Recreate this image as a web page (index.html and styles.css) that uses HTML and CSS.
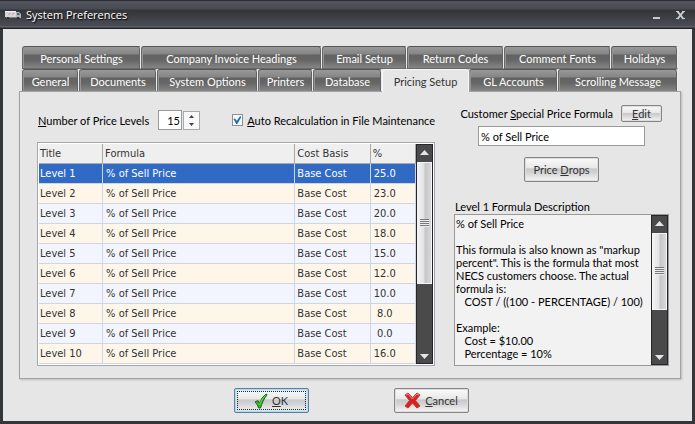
FILE: index.html
```html
<!DOCTYPE html>
<html lang="en">
<head>
<meta charset="utf-8">
<title>System Preferences</title>
<link rel="stylesheet" href="styles.css">
</head>
<body>
<div class="window">
  <header class="titlebar">
    <svg class="truck" width="17" height="10" viewBox="0 0 17 10" aria-hidden="true">
      <rect x="0" y="1" width="11" height="6" fill="#d4d6da"/>
      <rect x="0" y="1" width="11" height="1" fill="#f1f1f3"/>
      <path d="M11 2h3l2 2v4h-5z" fill="#aeb4bc"/>
      <path d="M12 3h2l1 2h-3z" fill="#59636f"/>
      <path d="M3.500 5l2-2M7 5l2-2" stroke="#e08a8c" stroke-width="1"/>
      <rect x="1" y="7" width="14" height="1" fill="#7b8088"/>
      <circle cx="3" cy="8" r="1" fill="#202226"/><circle cx="13" cy="8" r="1" fill="#202226"/>
    </svg>
    <h1>System Preferences</h1>
    <button class="caption" aria-label="Minimize"><svg width="9" height="9" viewBox="0 0 9 9"><path d="M1 6h7v2H1z" fill="#c3ccd5"/></svg></button>
    <button class="caption" aria-label="Close"><svg width="9" height="9" viewBox="0 0 9 9"><path d="M1.500 .5l6 7.500M7.500 .5l-6 7.500" stroke="#c3ccd5" stroke-width="2"/><path d="M0 0h3v1H0zM6 0h3v1H6zM0 7h3v1H0zM6 7h3v1H6z" fill="#c3ccd5"/></svg></button>
  </header>

  <main class="client">
    <nav class="tabs">
      <div class="tab-row row-back">
        <button class="tab">Personal Settings</button>
        <button class="tab">Company Invoice Headings</button>
        <button class="tab">Email Setup</button>
        <button class="tab">Return Codes</button>
        <button class="tab">Comment Fonts</button>
        <button class="tab">Holidays</button>
      </div>
      <div class="tab-row row-front">
        <button class="tab">General</button>
        <button class="tab">Documents</button>
        <button class="tab">System Options</button>
        <button class="tab">Printers</button>
        <button class="tab">Database</button>
        <button class="tab active">Pricing Setup</button>
        <button class="tab">GL Accounts</button>
        <button class="tab">Scrolling Message</button>
      </div>
    </nav>

    <section class="panel">
      <div class="levels">
        <div class="options">
          <label for="count"><u>N</u>umber of Price Levels</label>
          <input class="field count" id="count" type="text" value="15">
          <button class="spinner" aria-label="Change number of levels">
            <svg width="5" height="13" viewBox="0 0 5 13"><path d="M2.500 1L5 4H0zM0 9h5L2.500 12z" fill="#444"/></svg>
          </button>
          <input class="check" id="auto" type="checkbox" checked>
          <label for="auto"><u>A</u>uto Recalculation in File Maintenance</label>
        </div>
        <div class="grid-box">
          <table>
            <colgroup><col class="c-title"><col class="c-formula"><col class="c-basis"><col class="c-pct"></colgroup>
            <thead><tr><th>Title</th><th>Formula</th><th>Cost Basis</th><th>%</th></tr></thead>
            <tbody>
              <tr class="selected"><td>Level 1</td><td>% of Sell Price</td><td>Base Cost</td><td>25.0</td></tr>
              <tr><td>Level 2</td><td>% of Sell Price</td><td>Base Cost</td><td>23.0</td></tr>
              <tr><td>Level 3</td><td>% of Sell Price</td><td>Base Cost</td><td>20.0</td></tr>
              <tr><td>Level 4</td><td>% of Sell Price</td><td>Base Cost</td><td>18.0</td></tr>
              <tr><td>Level 5</td><td>% of Sell Price</td><td>Base Cost</td><td>15.0</td></tr>
              <tr><td>Level 6</td><td>% of Sell Price</td><td>Base Cost</td><td>12.0</td></tr>
              <tr><td>Level 7</td><td>% of Sell Price</td><td>Base Cost</td><td>10.0</td></tr>
              <tr><td>Level 8</td><td>% of Sell Price</td><td>Base Cost</td><td>&nbsp;8.0</td></tr>
              <tr><td>Level 9</td><td>% of Sell Price</td><td>Base Cost</td><td>&nbsp;0.0</td></tr>
              <tr><td>Level 10</td><td>% of Sell Price</td><td>Base Cost</td><td>16.0</td></tr>
            </tbody>
          </table>
          <div class="scroll scroll-grid">
            <svg class="arrow" viewBox="0 0 9 5"><path d="M4.500 0L9 5H0z"/></svg>
            <div class="thumb"><i class="grip"></i></div>
            <svg class="arrow" viewBox="0 0 9 5"><path d="M0 0h9L4.500 5z"/></svg>
          </div>
        </div>
      </div>

      <div class="formula">
        <div class="special">
          <label for="special">Customer <u>S</u>pecial Price Formula</label>
          <button class="btn edit"><span><u>E</u>dit</span></button>
        </div>
        <input class="field special-field" id="special" type="text" value="% of Sell Price">
        <button class="btn drops"><span>Price <u>D</u>rops</span></button>
        <label class="desc-label" for="desc">Level 1 Formula Description</label>
        <div class="desc-box">
          <textarea id="desc" readonly>% of Sell Price

This formula is also known as "markup
percent". This is the formula that most
NECS customers choose. The actual
formula is:
   COST / ((100 - PERCENTAGE) / 100)

Example:
   Cost = $10.00
   Percentage = 10%</textarea>
          <div class="scroll scroll-desc">
            <svg class="arrow" viewBox="0 0 9 5"><path d="M4.500 0L9 5H0z"/></svg>
            <div class="thumb"><i class="grip"></i></div>
            <svg class="arrow" viewBox="0 0 9 5"><path d="M0 0h9L4.500 5z"/></svg>
          </div>
        </div>
      </div>
    </section>

    <footer class="actions">
      <button class="btn ok">
        <svg width="14" height="16" viewBox="0 0 14 16" aria-hidden="true"><path d="M1 9l3-1.500 1.500 3C7 6 9 3 12.500 1L13 2C10 5.500 8 10 6.500 15H4.500C4 12.500 2.500 10.500 1 9z" fill="#3cb52c" stroke="#14690f" stroke-width="1"/><path d="M5.500 12C7 8 9 4.500 11.500 2.500" stroke="#6fd655" fill="none"/></svg>
        <span><u>O</u>K</span>
      </button>
      <button class="btn cancel">
        <svg width="17" height="17" viewBox="0 0 17 17" aria-hidden="true"><path d="M1 3l3-2 4.500 4.500L13 1l3 2-4.500 5.500L16 14l-3 2-4.500-5L4 16l-3-2 4.500-5.500z" fill="#d8201f" stroke="#c23a3a" stroke-width="1" stroke-linejoin="round"/><path d="M2 3l2-1 4.500 5L13 2l2 1" fill="none" stroke="#f08a86"/></svg>
        <span><u>C</u>ancel</span>
      </button>
    </footer>
  </main>
</div>
</body>
</html>
```
FILE: styles.css
```css
* { box-sizing: border-box; }

body {
  margin: 0;
  font-family: Lato, "Liberation Sans", sans-serif;
  font-size: 11px;
  line-height: 13px;
  color: #000;
}

button, input, textarea {
  font: inherit;
  color: inherit;
  margin: 0;
  padding: 0;
  border-radius: 0;
}

.window {
  min-height: 100vh;
  display: flex;
  flex-direction: column;
  padding: 0 3px 3px;
  background: #34373a;
  border-top: 1px solid #2c2d32;
}

.titlebar {
  height: 28px;
  display: flex;
  align-items: center;
  margin: 0 -3px;
  padding: 0 10px 0 5px;
  background: linear-gradient(#52545e 0, #484a54 8px, #343538 9px, #3d3e43 16px, #4b4d57 25px, #6a6c75 26px, #22232b 27px);
}

.titlebar h1 {
  flex: 1;
  margin: 0 0 0 4px;
  font-family: "Open Sans", sans-serif;
  font-size: 11px;
  font-weight: 400;
  line-height: 16px;
  color: #fff;
  text-shadow: 1px 1px 1px #000;
}

.caption {
  display: flex;
  margin-left: 15px;
  border: 0;
  background: none;
}

.client {
  flex: 1;
  display: flex;
  flex-direction: column;
  padding: 17px 11px 8px 16px;
  background: #e6e6e6;
}

.tab-row { display: grid; height: 23px; margin: 0 3px; }
.row-back { grid-template-columns: 119fr 181fr 85fr 97fr 107fr 67fr; }
.row-front { height: 22px; grid-template-columns: 57fr 78fr 101fr 55fr 69fr 87fr 89fr 120fr; }

.tab {
  min-width: 0;
  padding-top: 2px;
  border: 1px solid #686868;
  border-top: 1px solid #555;
  border-right: 1px solid #eee;
  border-radius: 3px 3px 0 0;
  background: linear-gradient(#999 0, #858585 7px, #626262 8px, #666 13px, #888 22px);
  box-shadow: inset -1px 0 #626262, inset 1px 0 #959595;
  color: #fff;
  white-space: nowrap;
}

.tab.active {
  position: relative;
  height: 23px;
  padding-top: 0;
  border: 1px solid #f6f6f6;
  border-bottom: 0;
  background: #e6e6e6;
  box-shadow: 1px 0 #999;
  color: #333;
}

.panel {
  flex: 1;
  display: grid;
  grid-template-columns: minmax(0, 398fr) minmax(0, 215fr);
  column-gap: 19px;
  padding: 13px 11px 12px 17px;
  border: 1px solid #a2a2a2;
  box-shadow: 1px 1px 2px #bbb;
}

.levels, .formula { display: flex; flex-direction: column; }
.levels { padding-top: 5px; }

.options { display: flex; align-items: center; height: 20px; margin-bottom: 12px; padding-left: 1px; white-space: nowrap; }
.options label:first-child { flex: 0 0 112px; }
.field { height: 20px; padding: 0 2px; border: 1px solid #999; background: #fff; }
.count { width: 24px; margin-left: 8px; padding-right: 1px; text-align: right; }

.spinner {
  display: flex;
  align-items: center;
  justify-content: center;
  width: 17px;
  height: 19px;
  margin-left: 1px;
  border: 1px solid #aaa;
  background: #f8f8f8;
}

.check {
  appearance: none;
  width: 12px;
  height: 12px;
  margin: 0 4px 0 32px;
  border: 1px solid #8c8f94;
  background: #f7f9fb;
  display: grid;
  place-items: center;
}

.check:checked::before {
  content: "";
  width: 8px;
  height: 8px;
  background: #2470b8;
  clip-path: polygon(0 38%, 20% 30%, 42% 60%, 85% 0, 100% 12%, 48% 100%, 34% 100%);
}

.grid-box { flex: 1; display: flex; padding: 1px; border: 1px solid #a3a7ae; background: #fff; }

table {
  flex: 1;
  height: 220px;
  table-layout: fixed;
  border-spacing: 0;
  font-family: "DejaVu Sans Condensed", "DejaVu Sans", sans-serif;
  color: #333;
}

.c-title { width: 17%; }
.c-formula { width: 51%; }
.c-basis { width: 20%; }
.c-pct { width: 12%; }

th, td {
  height: 20px;
  padding: 0 1px;
  border: solid #ced6e6;
  border-width: 0 1px 1px 0;
  font-weight: 400;
  text-align: left;
  white-space: nowrap;
}

th { border-color: #a9a9a9; background: #efefef; }
th + th, td + td { padding-left: 2px; }
td { background: #fff6ea; }
td:nth-child(2), td:last-child { padding-left: 3px; }
tr:nth-child(odd) td { background: #f3f5fe; }
tr.selected td { background: #316ac5; color: #fff; }

.scroll {
  width: 17px;
  display: flex;
  flex-direction: column;
  background: #4a4a4a;
  border: 1px solid #25262d;
}

.arrow { width: 9px; height: 5px; margin: 5px auto 7px; fill: #e5e5e5; flex: none; }
.arrow:last-child { margin: auto auto 4px; }
.thumb {
  display: grid;
  place-items: center;
  border: 1px solid #f4f4f4;
  background: linear-gradient(90deg, #f2f2f2, #e2e2e3 45%, #c5c5c9 55%, #d8d8da);
}
.scroll-grid .thumb { height: 56%; }
.scroll-desc .thumb { height: 52%; }
.grip { width: 9px; height: 8px; background: repeating-linear-gradient(#777 0 1px, #eee 1px 2px); }

.special { display: flex; align-items: center; justify-content: flex-end; gap: 8px; height: 17px; margin-right: 7px; white-space: nowrap; }
.special-field { margin: 4px 24px 11px; }

.btn {
  display: flex;
  align-items: center;
  justify-content: center;
  gap: 4px;
  width: 75px;
  height: 25px;
  border: 1px solid #858585;
  border-radius: 2px;
  background: linear-gradient(#fafafa, #e8e8e8 45%, #c8c8ca 46%, #d4d4d6 65%, #f6f6f6);
  box-shadow: inset 0 0 0 1px #ddd;
  color: #333;
}

.edit { width: 41px; height: 17px; }
.drops { align-self: center; }
.desc-label { margin: 18px 0 1px 1px; }
.desc-box { flex: 1; display: flex; border: 1px solid #999; background: #f2f2f2; }

.desc-box textarea {
  flex: 1;
  min-width: 0;
  padding: 2px 0 0 1px;
  border: 0;
  background: none;
  resize: none;
  overflow: hidden;
  white-space: pre;
}

.actions { display: flex; justify-content: center; gap: 85px; margin: 9px 0 0; padding-left: 2px; }
.ok { border-color: #5f7f96; box-shadow: inset 0 0 0 1px #b1daf3, inset 0 0 0 2px #cfe9f7; outline: 1px dotted #222; outline-offset: -4px; }
```
